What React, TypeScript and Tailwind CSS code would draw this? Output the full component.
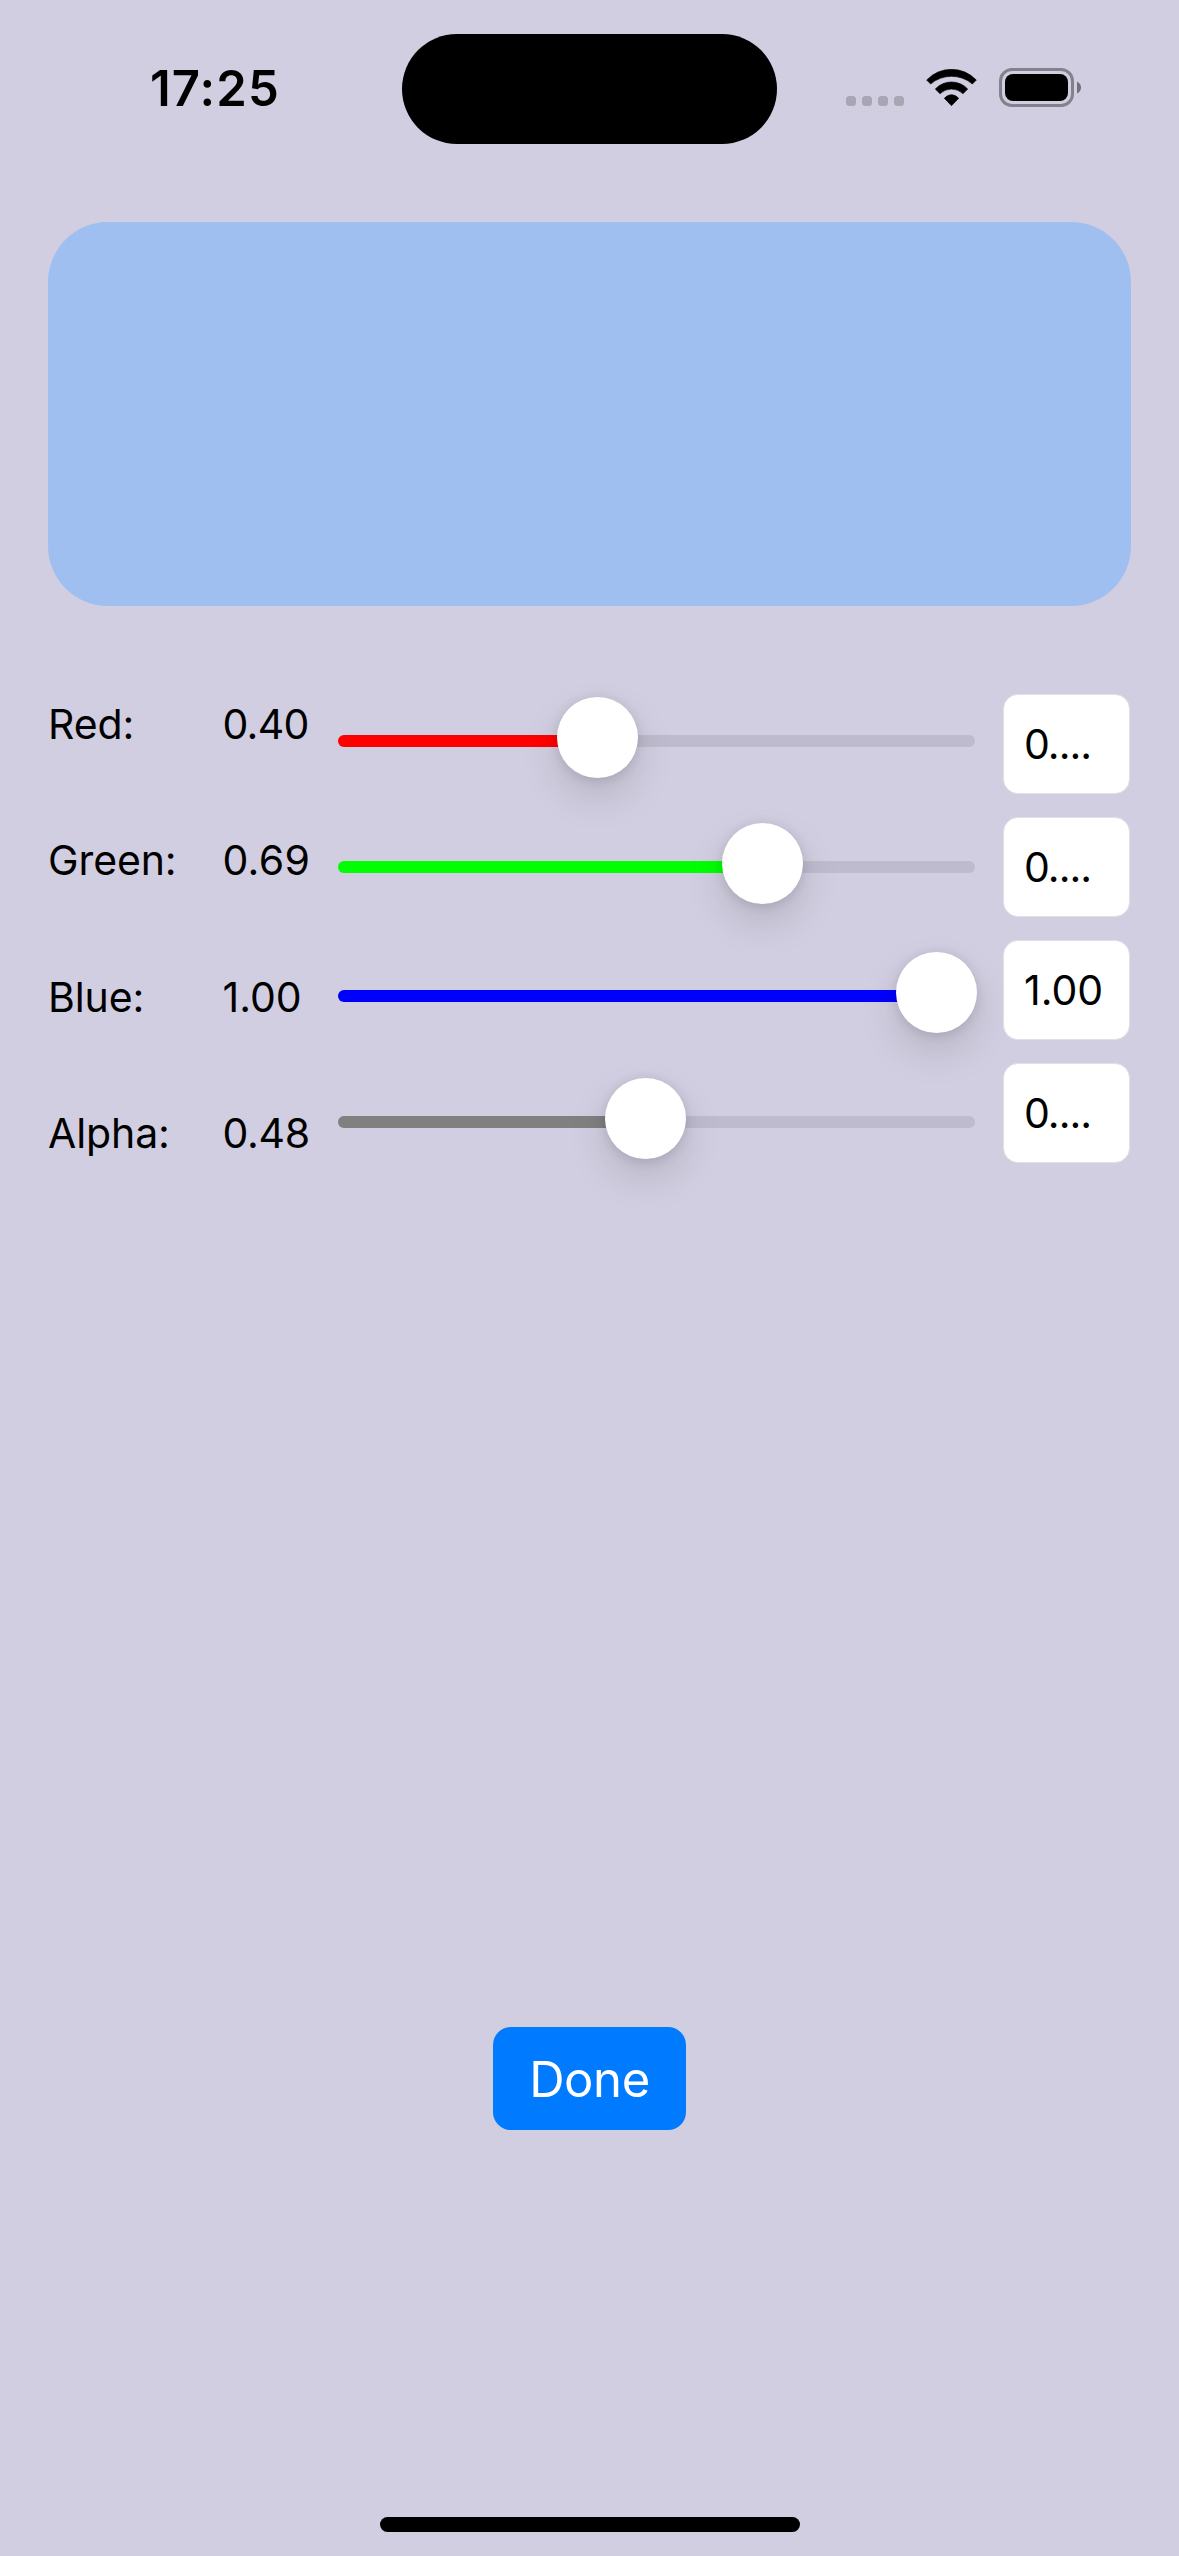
type Channel = {
  name: string;
  value: string;
  field: string;
  thumb: number;
  fill: string;
  valueTracking: string;
  sliderGap: string;
};

const channels: Channel[] = [
  { name: 'Red:', value: '0.40', field: '0....', thumb: 219, fill: 'bg-[#ff0000]', valueTracking: 'tracking-[-0.7px]', sliderGap: '' },
  { name: 'Green:', value: '0.69', field: '0....', thumb: 384, fill: 'bg-[#00ff00]', valueTracking: 'tracking-[0.3px]', sliderGap: 'mt-[45px]' },
  { name: 'Blue:', value: '1.00', field: '1.00', thumb: 558, fill: 'bg-[#0000ff]', valueTracking: 'tracking-normal', sliderGap: 'mt-12' },
  { name: 'Alpha:', value: '0.48', field: '0....', thumb: 267, fill: 'bg-[#808080]', valueTracking: 'tracking-[-0.3px]', sliderGap: 'mt-[45px]' },
];

function WifiIcon() {
  return (
    <svg className="ml-[22px] mt-[69px] h-[37px] w-[51px] shrink-0" viewBox="318 87 153 111" fill="#000" stroke="#000" strokeWidth="2" strokeLinejoin="round">
      <path d="M320 120 Q352 88 394.500 88 Q437 88 469 120 L457 132 Q430 109 394.500 109 Q359 109 332 132 Z" />
      <path d="M346 147 Q366 126 394.500 126 Q423 126 443 147 L429 161 Q414 147 394.500 147 Q375 147 360 161 Z" />
      <path d="M373 175 Q382 164 394.500 164 Q407 164 416 175 L394.500 197 Z" />
    </svg>
  );
}

function BatteryIcon() {
  return (
    <svg className="ml-[22px] mt-[68px] h-[39px] w-[82px] shrink-0" viewBox="0 0 82 39">
      <rect x="1.500" y="1.500" width="72" height="36" rx="11.500" fill="none" stroke="#84818d" strokeWidth="3" />
      <rect x="6" y="6" width="63" height="27" rx="8" fill="#000" />
      <path d="M78 13.500 Q82 15.500 82 19.500 Q82 23.500 78 25.500 Z" fill="#74717c" />
    </svg>
  );
}

function StatusBar() {
  return (
    <header className="flex h-[222px] items-start">
      <div className="w-[402px] pl-[150px] pt-[59px] text-[49px] font-semibold leading-[60px] tracking-[1.15px]">17:25</div>
      <div className="mt-[34px] h-[110px] w-[375px] rounded-full bg-black" />
      <div className="ml-[69px] mt-24 flex gap-1.5">
        {[0, 1, 2, 3].map((dot) => (
          <span key={dot} className="size-2.5 rounded-[3.5px] bg-[#a8a5b4]" />
        ))}
      </div>
      <WifiIcon />
      <BatteryIcon />
    </header>
  );
}

function Slider({ channel }: { channel: Channel }) {
  return (
    <div className={`relative h-[81px] pt-[38px] ${channel.sliderGap}`}>
      <div className="h-3 rounded-full bg-[#bfbbce]">
        <div className={`h-3 rounded-l-full ${channel.fill}`} style={{ width: channel.thumb + 40 }} />
      </div>
      <div
        className="absolute top-0 size-[81px] rounded-full bg-white shadow-[0_18px_39px_rgba(0,0,0,0.13),0_2px_12px_rgba(0,0,0,0.12)]"
        style={{ left: channel.thumb }}
      />
    </div>
  );
}

export default function App() {
  return (
    <div className="flex h-[2556px] w-[1179px] flex-col overflow-hidden bg-[#d1cee1] font-['Inter',sans-serif] text-black">
      <StatusBar />
      <div className="mx-12 h-[384px] shrink-0 rounded-[60px] bg-[#9fbff0]" />

      <main className="mt-[88px] flex h-[469px] shrink-0 items-start pl-12 text-[41px] leading-[50px]">
        <div className="mt-[5px] flex w-[174.5px] flex-col gap-[86.33px] tracking-[-0.1px]">
          {channels.map((c) => (
            <div key={c.name}>{c.name}</div>
          ))}
        </div>
        <div className="mt-[5px] flex w-[115.5px] flex-col gap-[86.33px]">
          {channels.map((c) => (
            <div key={c.name} className={c.valueTracking}>{c.value}</div>
          ))}
        </div>
        <div className="mt-[3px] w-[637px]">
          {channels.map((c) => (
            <Slider key={c.name} channel={c} />
          ))}
        </div>
        <div className="ml-7 flex w-[127px] flex-col gap-[23px]">
          {channels.map((c) => (
            <div
              key={c.name}
              className={`flex h-[100px] items-center rounded-[15px] border border-[#e2e0e6] bg-white pl-5 ${c.field === '1.00' ? 'tracking-normal' : 'tracking-[-1px]'}`}
            >
              {c.field}
            </div>
          ))}
        </div>
      </main>

      <button className="mt-[864px] h-[103px] w-[193px] shrink-0 self-center rounded-[18px] bg-[#007aff] pt-0.5 text-[49px] leading-[60px] tracking-[-0.4px] text-white">
        Done
      </button>
      <div className="mt-[387px] h-[15px] w-[420px] shrink-0 self-center rounded-full bg-black" />
    </div>
  );
}
